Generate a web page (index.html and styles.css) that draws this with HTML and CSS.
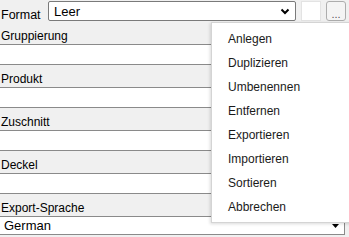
FILE: index.html
```html
<!DOCTYPE html>
<html lang="de">
<head>
    <meta charset="UTF-8">
    <title>Format</title>
    <link rel="stylesheet" href="styles.css">
</head>
<body>

    <div class="top-row">
        <span class="top-label">Format</span>
        <div class="combo">
            <span class="combo-text">Leer</span>
            <svg class="chevron" width="10" height="7" viewBox="0 0 10 7">
                <path d="M1.5 1.5 L5 5 L8.5 1.5" fill="none" stroke="#000" stroke-width="2"/>
            </svg>
        </div>
        <div class="color-box"></div>
        <button class="more-button">...</button>
    </div>

    <div class="group-label">Gruppierung</div>
    <div class="field"></div>
    <div class="group-label">Produkt</div>
    <div class="field"></div>
    <div class="group-label">Zuschnitt</div>
    <div class="field"></div>
    <div class="group-label">Deckel</div>
    <div class="field"></div>
    <div class="group-label">Export-Sprache</div>
    <div class="lang-select">
        <span>German</span>
        <svg class="arrow" width="7" height="4" viewBox="0 0 7 4">
            <path d="M0 0 L7 0 L3.5 4 Z" fill="#000"/>
        </svg>
    </div>

    <ul class="menu">
        <li>Anlegen</li>
        <li>Duplizieren</li>
        <li>Umbenennen</li>
        <li>Entfernen</li>
        <li>Exportieren</li>
        <li>Importieren</li>
        <li>Sortieren</li>
        <li>Abbrechen</li>
    </ul>

</body>
</html>
```

FILE: styles.css
```css
body {
    margin: 0;
    padding: 0;
    background-color: #f0f0f0;
    font-family: "Liberation Sans", Arial, sans-serif;
    font-size: 12px;
    color: #000;
    width: 349px;
    height: 237px;
    overflow: hidden;
    position: relative;
}
.top-row {
    display: flex;
    align-items: flex-start;
    height: 22px;
    padding-top: 1px;
    box-sizing: border-box;
}
.top-label {
    width: 47px;
    padding-left: 1px;
    line-height: 14px;
    margin-top: 7px;
    font-size: 12.5px;
}
.combo {
    width: 248px;
    height: 20px;
    box-sizing: border-box;
    border: 1px solid #7a7a7a;
    border-radius: 2px;
    background: #fff;
    display: flex;
    align-items: center;
    justify-content: space-between;
    padding: 0 5px 0 5px;
}
.combo-text {
    font-size: 13px;
}
.chevron {
    margin-top: 1px;
}
.color-box {
    width: 20px;
    height: 20px;
    box-sizing: border-box;
    margin-left: 5px;
    background: #fff;
    border: 1px solid #e3e3e3;
}
.more-button {
    width: 20px;
    height: 20px;
    margin-left: 5px;
    padding: 0 0 2px 0;
    box-sizing: border-box;
    border: 1px solid #adadad;
    border-radius: 3px;
    background: #f4f4f4;
    font-family: "Liberation Sans", Arial, sans-serif;
    font-size: 11px;
    color: #555;
    line-height: 24px;
}
.group-label {
    height: 22px;
    box-sizing: border-box;
    padding-left: 1px;
    padding-top: 7px;
    line-height: 14px;
}
.field {
    height: 21px;
    width: 345px;
    box-sizing: border-box;
    background: #fff;
    border-top: 1px solid #8a8a8a;
    border-bottom: 1px solid #8a8a8a;
}
.lang-select {
    width: 345px;
    height: 19px;
    box-sizing: border-box;
    background: #fff;
    border: 1px solid #8a8a8a;
    border-left: none;
    display: flex;
    align-items: center;
    justify-content: space-between;
    padding: 0 5px 0 4px;
    font-size: 13px;
}
.arrow {
    margin-top: 1px;
}
.menu {
    position: absolute;
    left: 211px;
    top: 22px;
    width: 150px;
    height: 201px;
    box-sizing: border-box;
    margin: 0;
    padding: 4px 0 5px 0;
    list-style: none;
    background: #fff;
    border: 1px solid #d4d4d4;
    box-shadow: -1px 1px 3px rgba(0,0,0,0.15);
}
.menu li {
    height: 24px;
    line-height: 24px;
    padding-left: 16px;
    color: #1a1a1a;
}
```
